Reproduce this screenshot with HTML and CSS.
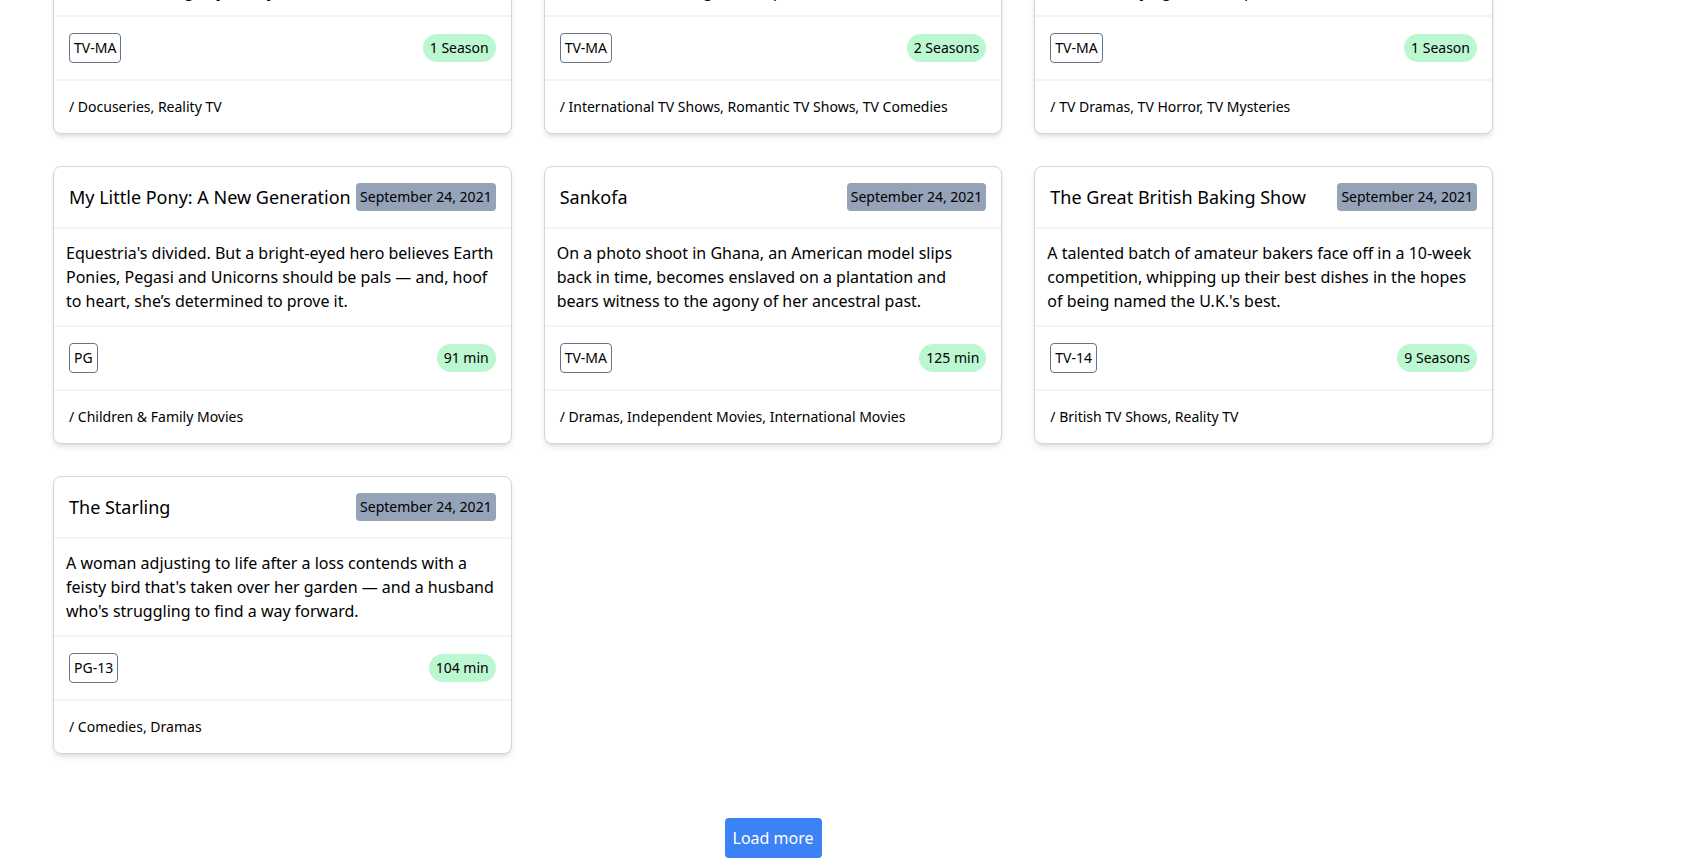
FILE: index.html
```html
<!DOCTYPE html>
<html lang="en">
<head>
<meta charset="utf-8">
<title>Shows</title>
<link rel="stylesheet" href="styles.css">
</head>
<body>
<main class="page">
  <div class="grid">
    <article class="card">
      <header class="card-head"><h2 class="title">Jailbirds New Orleans</h2><span class="date">September 24, 2021</span></header>
      <p class="desc">Feuds, flirtations and toilet talk go down among the incarcerated women at the Orleans Justice Center in New Orleans on this gritty reality series.</p>
      <div class="card-meta"><span class="rating">TV-MA</span><span class="duration">1 Season</span></div>
      <div class="genres">/ Docuseries, Reality TV</div>
    </article>
    <article class="card">
      <header class="card-head"><h2 class="title">Kota Factory</h2><span class="date">September 24, 2021</span></header>
      <p class="desc">In a city of coaching centers known to train India’s finest collegiate minds, an earnest but unexceptional student and his friends navigate campus life.</p>
      <div class="card-meta"><span class="rating">TV-MA</span><span class="duration">2 Seasons</span></div>
      <div class="genres">/ International TV Shows, Romantic TV Shows, TV Comedies</div>
    </article>
    <article class="card">
      <header class="card-head"><h2 class="title">Midnight Mass</h2><span class="date">September 24, 2021</span></header>
      <p class="desc">The arrival of a charismatic young priest brings glorious miracles, ominous mysteries and renewed religious fervor to a dying town desperate to believe.</p>
      <div class="card-meta"><span class="rating">TV-MA</span><span class="duration">1 Season</span></div>
      <div class="genres">/ TV Dramas, TV Horror, TV Mysteries</div>
    </article>

    <article class="card">
      <header class="card-head"><h2 class="title">My Little Pony: A New Generation</h2><span class="date">September 24, 2021</span></header>
      <p class="desc">Equestria's divided. But a bright-eyed hero believes Earth Ponies, Pegasi and Unicorns should be pals — and, hoof to heart, she’s determined to prove it.</p>
      <div class="card-meta"><span class="rating">PG</span><span class="duration">91 min</span></div>
      <div class="genres">/ Children &amp; Family Movies</div>
    </article>
    <article class="card">
      <header class="card-head"><h2 class="title">Sankofa</h2><span class="date">September 24, 2021</span></header>
      <p class="desc">On a photo shoot in Ghana, an American model slips back in time, becomes enslaved on a plantation and bears witness to the agony of her ancestral past.</p>
      <div class="card-meta"><span class="rating">TV-MA</span><span class="duration">125 min</span></div>
      <div class="genres">/ Dramas, Independent Movies, International Movies</div>
    </article>
    <article class="card">
      <header class="card-head"><h2 class="title">The Great British Baking Show</h2><span class="date">September 24, 2021</span></header>
      <p class="desc">A talented batch of amateur bakers face off in a 10-week competition, whipping up their best dishes in the hopes of being named the U.K.'s best.</p>
      <div class="card-meta"><span class="rating">TV-14</span><span class="duration">9 Seasons</span></div>
      <div class="genres">/ British TV Shows, Reality TV</div>
    </article>

    <article class="card">
      <header class="card-head"><h2 class="title">The Starling</h2><span class="date">September 24, 2021</span></header>
      <p class="desc">A woman adjusting to life after a loss contends with a feisty bird that's taken over her garden — and a husband who's struggling to find a way forward.</p>
      <div class="card-meta"><span class="rating">PG-13</span><span class="duration">104 min</span></div>
      <div class="genres">/ Comedies, Dramas</div>
    </article>
  </div>
  <div class="more">
    <button class="load-more" type="button">Load more</button>
  </div>
</main>
</body>
</html>
```

FILE: styles.css
```css
* {
  box-sizing: border-box;
}

html, body {
  margin: 0;
  padding: 0;
  background: #ffffff;
}

body {
  font-family: "Noto Sans", "Open Sans", sans-serif;
  color: #000000;
  font-size: 16px;
  line-height: 24px;
}

.page {
  width: 1493px;
  padding-left: 53px;
  /* page is shown scrolled down: first row partly above viewport */
  margin-top: -144px;
  padding-bottom: 40px;
}

.grid {
  display: grid;
  grid-template-columns: repeat(3, 1fr);
  gap: 32px;
}

.card {
  display: flex;
  flex-direction: column;
  border: 1px solid #d4d4d8;
  border-radius: 8px;
  background: #ffffff;
  box-shadow: 0 4px 6px -1px rgba(0, 0, 0, 0.1), 0 2px 4px -2px rgba(0, 0, 0, 0.1);
  overflow: hidden;
}

.card-head {
  display: flex;
  align-items: center;
  justify-content: space-between;
  padding: 16px 15px 16px 15px;
  border-bottom: 2px solid #f3f4f6;
}

.title {
  margin: 0;
  font-size: 18px;
  line-height: 28px;
  font-weight: 400;
  color: #000000;
}

.date {
  flex: none;
  background: #94a3b8;
  border-radius: 4px;
  padding: 4px 4px;
  font-size: 14px;
  line-height: 20px;
  color: #000000;
}

.desc {
  margin: 0;
  padding: 12px 14px 12px 12px;
  flex: 1;
  border-bottom: 2px solid #f3f4f6;
  font-size: 16px;
  line-height: 24px;
}

.card-meta {
  display: flex;
  align-items: center;
  justify-content: space-between;
  padding: 16px 15px;
  border-bottom: 2px solid #f3f4f6;
}

.rating {
  border: 1px solid #64748b;
  border-radius: 4px;
  padding: 2px 4px;
  font-size: 14px;
  line-height: 24px;
}

.duration {
  background: #bbf7d0;
  border-radius: 9999px;
  padding: 2px 7px;
  font-size: 14px;
  line-height: 24px;
}

.genres {
  padding: 16px 15px;
  font-size: 14px;
  line-height: 20px;
}

.more {
  display: flex;
  justify-content: center;
  margin-top: 64px;
}

.load-more {
  font-family: "Noto Sans", "Open Sans", sans-serif;
  font-size: 16px;
  line-height: 24px;
  color: #ffffff;
  background: #3b82f6;
  border: none;
  border-radius: 4px;
  padding: 8px 8px;
  cursor: pointer;
}
```
